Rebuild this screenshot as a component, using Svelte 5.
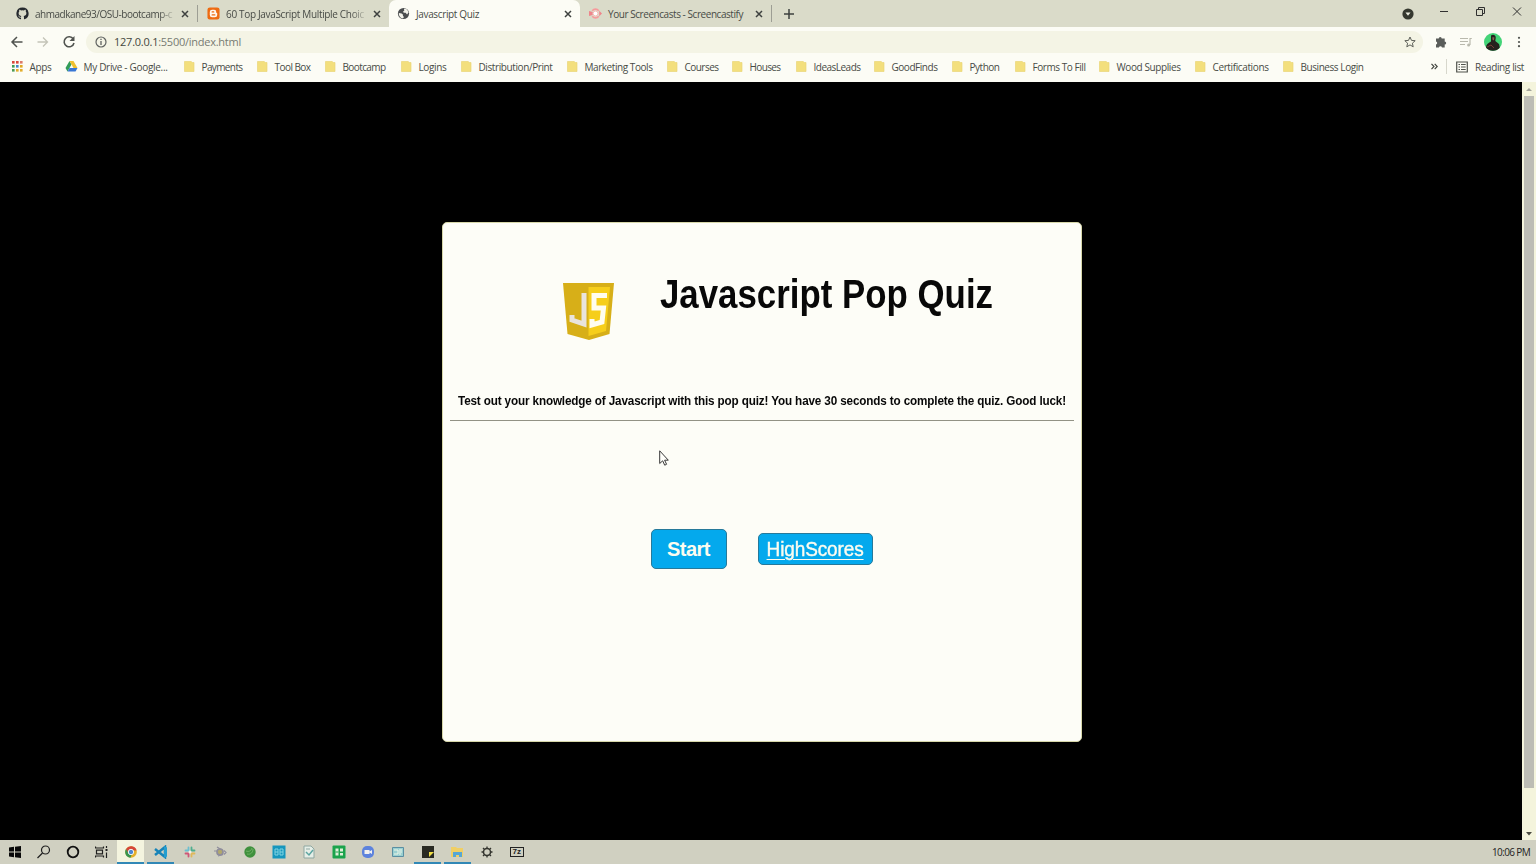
<script>
  const tabs = [
    { icon: 'github', title: 'ahmadkane93/OSU-bootcamp-c', width: 190, text: 137 },
    { icon: 'blogger', title: '60 Top JavaScript Multiple Choic', width: 191, text: 138 },
    { icon: 'globe', title: 'Javascript Quiz', width: 191, text: 63, active: true },
    { icon: 'cast', title: 'Your Screencasts - Screencastify', width: 192, text: 135 }
  ];
  // Slot is the distance to the next bookmark; text is the label's own width.
  const bookmarks = [
    ['Apps', 54, 22], ['My Drive - Google...', 118, 84], ['Payments', 73, 41],
    ['Tool Box', 68, 36], ['Bootcamp', 76, 43], ['Logins', 60, 28],
    ['Distribution/Print', 106, 74], ['Marketing Tools', 100, 68], ['Courses', 65, 34],
    ['Houses', 64, 31], ['IdeasLeads', 78, 47], ['GoodFinds', 78, 46],
    ['Python', 63, 30], ['Forms To Fill', 84, 53], ['Wood Supplies', 96, 64],
    ['Certifications', 88, 56], ['Business Login', 100, 63]
  ];
  const dots = ['#d9483b', '#d9483b', '#dc7a6a', '#3f9c57', '#4285c8', '#e0a825', '#4b9a55', '#e2ad2b', '#e2ad2b'];

  // Spreads a label evenly over a given width.
  function fit(node, width) {
    const apply = () => {
      node.style.letterSpacing = '0px';
      const natural = node.getBoundingClientRect().width;
      const scale = node.offsetWidth ? natural / node.offsetWidth : 1;
      node.style.letterSpacing = (width - natural) / scale / node.textContent.length + 'px';
    };
    apply();
    document.fonts?.ready.then(apply);
  }
</script>

<div class="screen">
  <header>
    <div class="tabs">
      {#each tabs as tab, i}
        <div class="tab" class:active={tab.active} class:ruled={i === 0 || i === 3} style="width:{tab.width}px">
          <svg class="favicon" viewBox="0 0 14 14">
            {#if tab.icon === 'github'}
              <path fill="#25292e" d="M7 .5a6.5 6.5 0 0 0-2 12.7c.3 0 .4-.2.4-.4v-1.400c-1.800.4-2.200-.7-2.200-.7-.3-.8-.8-1-.8-1-.6-.4.1-.4.1-.4.7 0 1 .7 1 .7.6 1 1.500.7 1.900.6 0-.4.2-.7.4-.9-1.500-.2-3-.7-3-3.200 0-.7.3-1.300.7-1.700 0-.2-.3-.9.1-1.800 0 0 .5-.2 1.800.7a6 6 0 0 1 3.200 0c1.300-.9 1.800-.7 1.800-.7.4.9.1 1.600.1 1.800.4.4.7 1 .7 1.700 0 2.500-1.500 3-3 3.200.2.2.4.6.4 1.200v1.900c0 .2.1.4.4.4A6.500 6.500 0 0 0 7 .5Z" />
            {:else if tab.icon === 'blogger'}
              <rect x=".5" y=".5" width="13" height="13" rx="2.500" fill="#ee6b12" />
              <path fill="#fff8ef" d="M5.500 3h2.200A2.300 2.300 0 0 1 10 5.300v.5c0 .5.3.6.6.7.3.1.4.3.4.6v1.400A2.500 2.500 0 0 1 8.500 11h-3A2.500 2.500 0 0 1 3 8.500v-3A2.500 2.500 0 0 1 5.500 3Z" />
              <path d="M5.500 5.300h1.800M5.500 8.500h3" stroke="#ee6b12" stroke-width="1.200" stroke-linecap="round" />
            {:else if tab.icon === 'globe'}
              <circle cx="7" cy="7" r="6" fill="#4b4e50" />
              <path fill="#f3f3eb" d="M2 6.400l3 .5 1.500 1.400-.2 1.200 1.200 1.300-1 1.300C4 12 1.800 10 2 6.400ZM7.500 2l2-.2c1.800.9 2.800 2.400 2.900 4.200l-1.600 2-1.500-1.700-2-.1-1-1.400 1.500-.6Z" />
            {:else}
              <path d="M3.500 4A4.500 4.500 0 0 1 10.500 4M3.500 10A4.500 4.500 0 0 0 10.500 10" fill="none" stroke="#f79a9c" stroke-width="1.800" />
              <path fill="#ef858b" d="M0 4.300 4 5.500v3L0 9.700ZM14 7l-3-3v6Z" />
              <circle cx="7" cy="7" r="2.600" fill="#fff" stroke="#f6b7b3" />
            {/if}
          </svg>
          <span class="title" class:faded={i < 2}><span use:fit={tab.text}>{tab.title}</span></span>
          <svg class="close" viewBox="0 0 8 8"><path d="m1 1 6 6M7 1 1 7" stroke="#3e413f" stroke-width="1.500" /></svg>
        </div>
      {/each}
      <svg class="plus" viewBox="0 0 10 10"><path d="M5 0v10M0 5h10" stroke="#3e413f" stroke-width="1.500" /></svg>
      <div class="window">
        <svg width="12" height="12" viewBox="0 0 12 12"><circle cx="6" cy="6" r="5.600" fill="#35382f" /><path d="M3.500 4.500h5L6 7.800Z" fill="#ecece0" /></svg>
        <svg width="8" height="12" viewBox="0 0 8 12"><path d="M0 5.500h8" stroke="#303030" /></svg>
        <svg width="9" height="12" viewBox="0 0 9 12"><path d="M.5 3.500h6v6h-6ZM2.500 3.500v-2h6v6h-2" fill="none" stroke="#303030" /></svg>
        <svg width="10" height="12" viewBox="0 0 10 12"><path d="m1 1.500 8 8M9 1.500l-8 8" stroke="#303030" /></svg>
      </div>
    </div>

    <div class="toolbar">
      <svg class="nav" viewBox="0 0 14 14"><path d="M12.500 7H2M7 2 2 7l5 5" fill="none" stroke="#50534f" stroke-width="1.500" /></svg>
      <svg class="nav" viewBox="0 0 14 14"><path d="M1.500 7H11M7 2.500 11.500 7 7 11.500" fill="none" stroke="#c4c4b8" stroke-width="1.300" /></svg>
      <svg class="nav" viewBox="0 0 14 14"><path d="M11.300 4A5 5 0 1 0 12 8" fill="none" stroke="#50534f" stroke-width="1.600" /><path d="M12.500 1v5h-5Z" fill="#50534f" /></svg>
      <div class="address">
        <svg width="12" height="12" viewBox="0 0 12 12"><circle cx="6" cy="6" r="5" fill="none" stroke="#5f6260" stroke-width="1.200" /><path d="M6 5v4M6 2.700v1.400" stroke="#5f6260" stroke-width="1.300" /></svg>
        <span class="url" use:fit={127}>127.0.0.1<span class="path">:5500/index.html</span></span>
        <svg class="star" viewBox="0 0 12 12"><path d="m6 1 1.500 3.400 3.700.3-2.800 2.500.8 3.600L6 8.900l-3.200 1.900.8-3.600L.8 4.700l3.700-.3Z" fill="none" stroke="#5c5f58" /></svg>
      </div>
      <div class="extensions">
        <svg width="12" height="12" viewBox="0 0 12 12"><path fill="#5a5d5a" d="M1 2.500h2.700a1.500 1.500 0 0 1 3 0h3v3a1.500 1.500 0 0 1 0 3v3H7a1.600 1.600 0 0 0-3.100 0H1V8.600a1.600 1.600 0 0 0 0-3.100Z" /></svg>
        <svg width="13" height="12" viewBox="0 0 13 12"><path d="M1 2.500h8M1 5.500h8M1 8.500h5M11 9V2.500h1.800" fill="none" stroke="#b9b9ad" stroke-width="1.200" /><circle cx="9.600" cy="9" r="1.500" fill="#b9b9ad" /></svg>
        <svg width="18" height="18" viewBox="0 0 18 18"><circle cx="9" cy="9" r="9" fill="#43d477" /><path fill="#25211e" d="M7 2.500c2-1.500 5-.5 4.700 2.500l-.4 3 3.700 3 .8 3.500A9 9 0 0 1 2 14.500c0-3 2-4.500 5-6Z" /><path d="m8.500 4 2 .5-.6 3-1.500-1Z" fill="#86634e" /><path d="m3 14 4-2 3 3" stroke="#773c35" fill="none" /></svg>
        <svg width="4" height="14" viewBox="0 0 4 14"><g fill="#50534f"><circle cx="2" cy="2.800" r="1.100" /><circle cx="2" cy="7" r="1.100" /><circle cx="2" cy="11.200" r="1.100" /></g></svg>
      </div>
    </div>

    <div class="bookmarks">
      {#each bookmarks as [label, slot, text], i}
        <div class="bookmark" style="width:{slot}px">
          <svg viewBox="0 0 13 13">
            {#if i === 0}
              {#each dots as color, d}
                <rect x={1 + (d % 3) * 4} y={1 + Math.floor(d / 3) * 4} width="2.600" height="2.600" fill={color} />
              {/each}
            {:else if i === 1}
              <path fill="#329c58" d="M4.500 1 .5 8l2 3.500 4-7Z" /><path fill="#efbf2e" d="M4.500 1h4l4 7h-4Z" /><path fill="#3977d5" d="M4.500 8h8l-2 3.500h-8Z" />
            {:else}
              <path d="M1.500 1.500h6.800l1 1h1.700v9H1.500Z" fill="#f3df7d" stroke="#e9d578" stroke-width=".7" />
            {/if}
          </svg>
          <span use:fit={text}>{label}</span>
        </div>
      {/each}
      <div class="reading">
        <svg width="7" height="7" viewBox="0 0 7 7"><path d="m.5.8 2.500 2.700L.5 6.200M3.700.8l2.500 2.700-2.500 2.700" fill="none" stroke="#42453f" stroke-width="1.200" /></svg>
        <i></i>
        <svg width="12" height="12" viewBox="0 0 12 12"><path d="M.7 1h10.600v10H.7ZM2.500 3.500H4M5 3.500h4.700M2.500 6H4M5 6h4.700M2.500 8.500H4M5 8.500h4.700" fill="none" stroke="#50534d" stroke-width="1.200" /></svg>
        <span use:fit={49}>Reading list</span>
      </div>
    </div>
  </header>

  <main>
    <section class="page">
      <div class="card">
        <div class="heading">
          <svg class="logo" viewBox="0 0 52 60">
            <path fill="#d7af18" d="M0 1h51l-4.500 51L26 58 4.500 52Z" />
            <path fill="#f6ce1b" d="M25.500 5H47l-4 44-17.500 5Z" />
            <path fill="none" stroke="#e9e4dc" stroke-width="5" d="M21 11v31L9 38v-5" />
            <path fill="none" stroke="#fffdf0" stroke-width="5" d="M44 13.500H31V26h9.500L39 40l-10 3v-6" />
          </svg>
          <h1><span use:fit={333}>Javascript Pop Quiz</span></h1>
        </div>
        <p><span use:fit={608}>Test out your knowledge of Javascript with this pop quiz! You have 30 seconds to complete the quiz. Good luck!</span></p>
        <hr />
        <div class="actions">
          <button><span use:fit={43}>Start</span></button>
          <a href="#scores"><span use:fit={97}>HighScores</span></a>
        </div>
        <svg class="cursor" viewBox="0 0 10 16"><path d="M.7.8v12.700l3-2.700 2 4.400 1.900-.9-2-4.100h3.700Z" fill="#fffffb" stroke="#383838" /></svg>
      </div>
    </section>
    <aside>
      <svg viewBox="0 0 6 4"><path d="M0 4h6L3 1Z" fill="#a4a49a" /></svg>
      <div class="thumb"></div>
      <svg viewBox="0 0 6 4"><path d="M0 0h6L3 3.500Z" fill="#4a4a40" /></svg>
    </aside>
  </main>

  <footer>
    {#each Array(17) as _, i}
      <div class="task" class:system={i < 4} class:current={i === 4} class:open={[4, 5, 14, 15].includes(i)}>
        <svg viewBox="0 0 14 14">
          {#if i === 0}
            <path fill="#090909" d="m1 2.500 5-.7v4.700H1Zm6-.8L13 1v5.500H7ZM1 7.500h5v4.700l-5-.7Zm6 0h6V13l-6-.8Z" />
          {:else if i === 1}
            <circle cx="8.500" cy="5" r="4" fill="none" stroke="#202020" stroke-width="1.200" /><path d="m5.500 8-5 5" stroke="#202020" stroke-width="1.300" />
          {:else if i === 2}
            <circle cx="7" cy="7" r="5.300" fill="none" stroke="#101010" stroke-width="1.800" />
          {:else if i === 3}
            <path d="M.5 1.500V3h8V1.500M.5 12.500V11h8v1.500M1.500 5.200h6v3.600h-6ZM11.500 1v2m0 4.500V13" fill="none" stroke="#202020" stroke-width="1.200" /><path d="M10.500 4h2v2h-2Z" fill="#202020" />
          {:else if i === 4}
            <circle cx="7" cy="7" r="5.800" fill="#e5af28" /><path fill="#d54639" d="M2 4a5.800 5.800 0 0 1 10.600 1.500H7L4.500 9Z" /><path fill="#399551" d="m2 4 3 5 2.500 1-1 2.800A5.800 5.800 0 0 1 2 4Z" /><circle cx="7" cy="7" r="2.700" fill="#4c86d3" stroke="#f4f4e8" />
          {:else if i === 5}
            <path d="M1 4 11 12V2L1 10" fill="none" stroke="#1683b8" stroke-width="2.500" /><path d="m10 1 3 1.500v9L10 13Z" fill="#239ed0" />
          {:else if i === 6}
            <g stroke-width="1.800" stroke-linecap="round"><path d="M5.500 2.500v3M2.500 5.500h3" stroke="#6cbfd0" /><path d="M8.500 2.500v3h3" stroke="#4eae8e" fill="none" /><path d="M8.500 8.500h3M8.500 8.500v3" stroke="#e0b85a" /><path d="M5.500 8.500v3M2.500 8.500h3" stroke="#cf5678" /></g><circle cx="7" cy="7" r="1.500" fill="#f4efe8" />
          {:else if i === 7}
            <circle cx="7" cy="7" r="3" fill="#b2a86c" stroke="#8f8d9c" stroke-width="1.700" /><path d="M1 6h3m1 5 5-1.500M4 2l4 2.500M11 5.500l2 2-2 2" fill="none" stroke="#8f8d9c" stroke-width="1.200" />
          {:else if i === 8}
            <circle cx="7" cy="7" r="5.700" fill="#3f913d" /><path d="M4 9c4 1 6-2 6-5M3 6c3 1 5 0 6-3" stroke="#71b166" fill="none" />
          {:else if i === 9}
            <rect x=".5" y=".5" width="13" height="13" fill="#1696bd" /><path d="M3 4h3v6H3Zm5 0h3v6H8ZM3 7h3m2 0h3" fill="none" stroke="#80d4e2" />
          {:else if i === 10}
            <path d="M2 1h7l3 3v9H2Z" fill="#e5eee7" stroke="#8fa7a1" /><path d="m4 7 3 3 4-5" fill="none" stroke="#5ba5a1" stroke-width="1.500" /><path d="M4 4h4" stroke="#8fa7a1" />
          {:else if i === 11}
            <rect x=".5" y=".5" width="13" height="13" rx="1" fill="#1aa34c" /><path d="M3.500 3.500h3v7h-3ZM8 3.500h3v3H8ZM8 8h3v2.500H8Z" fill="#ddefd8" /><path d="M3.500 7h3" stroke="#1aa34c" />
          {:else if i === 12}
            <rect x="1" y="1" width="12" height="12" rx="5" fill="#5d83dd" /><path d="M3.500 5h5v4h-5Zm5 1.500L11 5v4L8.500 7.500Z" fill="#f2f1f0" />
          {:else if i === 13}
            <path d="M1.500 2.500h11v9h-11Z" fill="#9ad0d1" stroke="#5a8fa2" /><path d="M3 5h4v4H3m5-4h3M8 7h3M8 9h2" fill="none" stroke="#eef6e7" />
          {:else if i === 14}
            <path fill="#292a22" d="M1 1h12v12H1Z" /><path fill="#f2df46" d="M8 7h5l-5 5Z" />
          {:else if i === 15}
            <path d="M1 2h5l1 1h6v9H1Z" fill="#f0cf65" /><path d="M3 7h9v5H9v-2H6v2H3Z" fill="#56a6d5" />
          {:else}
            <circle cx="7" cy="7" r="3.500" fill="none" stroke="#34352f" stroke-width="1.500" /><path d="M7 1.500v2m0 7v2M1.500 7h2m7 0h2M3 3l1.500 1.500m5 5L11 11m0-8L9.500 4.500m-5 5L3 11" stroke="#34352f" stroke-width="1.300" />
          {/if}
        </svg>
      </div>
    {/each}
    <div class="task"><div class="zip">7z</div></div>
    <time use:fit={38}>10:06 PM</time>
  </footer>
</div>

<style>
  :global(body) { margin: 0; overflow: hidden; }
  * { box-sizing: border-box; }
  svg { display: block; flex: none; }
  .screen { display: flex; flex-direction: column; width: 1536px; height: 864px; background: #000; color: #484b46; font: 10px/14px "Open Sans", sans-serif; }
  header { height: 82px; flex: none; background: #fcfcf5; }
  .tabs { display: flex; height: 27px; padding-left: 8px; background: #dadbc9; align-items: center; }
  .tab { position: relative; display: flex; align-items: center; height: 27px; padding: 0 8px; flex: none; }
  .tab:nth-child(2) { padding-left: 9px; }
  .tab.ruled { border-right: 1px solid #a5a69a; border-image: linear-gradient(transparent 22%, #9d9e94 22% 78%, transparent 78%) 1; }
  .tab.active { background: #fcfcf5; border-radius: 7px 7px 0 0; }
  .tab:nth-child(4) { padding-left: 9px; }
  .favicon { width: 13px; height: 13px; }
  .title { flex: 1; min-width: 0; margin: 0 5px 0 6px; white-space: nowrap; }
  .title span { display: inline-block; }
  .faded { mask-image: linear-gradient(90deg, #000 88%, transparent); }
  .close { width: 8px; height: 8px; }
  .plus { width: 10px; height: 10px; margin-left: 12px; }
  .window { display: flex; align-items: center; margin-left: auto; padding-right: 14px; }
  .window svg:nth-child(2) { margin-left: 26px; }
  .window svg:nth-child(3) { margin-left: 28px; }
  .window svg:nth-child(4) { margin-left: 27px; }
  .window svg:not(:first-child) { margin-bottom: 3px; }
  .toolbar { display: flex; align-items: center; height: 28px; padding: 1px 15px 0 10px; }
  .nav { width: 14px; height: 14px; margin-right: 12px; }
  .nav:nth-child(3) { margin-right: 10px; }
  .address { display: flex; align-items: center; flex: 1; height: 22px; border-radius: 11px; padding: 0 7px 0 9px; background: #f4f4e5; font-size: 11px; }
  .url { margin-left: 7px; color: #444740; white-space: nowrap; }
  .path { color: #777b72; }
  .star { width: 12px; height: 12px; margin-left: auto; }
  .extensions { display: flex; align-items: center; margin-left: 12px; }
  .extensions svg:nth-child(2) { margin-left: 12px; }
  .extensions svg:nth-child(3) { margin-left: 12px; }
  .extensions svg:nth-child(4) { margin-left: 15px; }
  .bookmarks { display: flex; align-items: center; height: 27px; padding: 0 12px 4px 11px; }
  .bookmark { display: flex; align-items: center; flex: none; white-space: nowrap; }
  .bookmark svg { width: 13px; height: 13px; margin-right: 5.5px; }
  .reading { display: flex; align-items: center; margin-left: auto; white-space: nowrap; }
  .reading i { height: 15px; border-left: 1px solid #d7d7cc; margin: 0 9px 0 8px; }
  .reading span { margin-left: 7px; }
  main { display: flex; height: 758px; }
  .page { display: flex; flex: 1; justify-content: center; align-items: flex-start; padding: 140px 0 0 1px; background: #000; }
  .card { position: relative; width: 640px; height: 520px; padding: 0 8px; background: #fdfdf7; border: 1px solid #d7d7a9; border-radius: 5px; color: #080808; font-family: "Liberation Sans", sans-serif; }
  .heading { display: flex; height: 159px; padding: 59px 0 0 112px; align-items: flex-start; }
  .logo { width: 52px; height: 60px; }
  h1 { margin: -12px 0 0 45px; font-size: 40px; line-height: 48px; white-space: nowrap; }
  p { margin: 0; height: 38px; padding: 10px 0 0 7px; font-size: 13px; line-height: 18px; font-weight: bold; white-space: nowrap; }
  h1 span, p span, button span, a span { display: inline-block; white-space: nowrap; }
  h1 span { transform: scaleX(.87); transform-origin: left; }
  p span { transform: scaleX(.9); transform-origin: left; }
  hr { margin: 0 -1px; border: 0; border-top: 1px solid #929285; }
  .actions { display: flex; align-items: center; justify-content: center; gap: 31px; margin-top: 107px; height: 42px; padding-bottom: 1px; }
  button, a { display: flex; align-items: center; justify-content: center; border: 1px solid #26799a; border-radius: 5px; background: #04a9ed; color: #fcfcf0; font: 20px/24px "Liberation Sans", sans-serif; }
  button { width: 76px; height: 40px; padding: 0; font-weight: bold; }
  a { width: 115px; height: 32px; text-decoration: underline; text-underline-offset: 3px; text-decoration-thickness: 1px; -webkit-text-stroke: .4px #fcfcf0; }
  a span { transform: scaleX(.95); }
  .cursor { position: absolute; left: 216px; top: 227px; width: 10px; height: 16px; }
  aside { display: flex; flex-direction: column; align-items: center; width: 14px; padding: 5px 0 4px; background: #f4f4dc; }
  aside svg { width: 6px; height: 4px; }
  .thumb { width: 10px; height: 692px; margin: 5px 0 auto; background: #bdbdb5; }
  footer { display: flex; align-items: center; height: 24px; background: #d0d0c1; }
  .task { display: flex; width: 27px; height: 24px; margin: 0 1.35px; align-items: center; justify-content: center; flex: none; border-bottom: 2px solid transparent; padding-top: 2px; }
  .task.system { width: 29px; margin: 0; }
  .task svg { width: 14px; height: 14px; }
  .task.current { background: #f4f4df; }
  .task.open { border-bottom-color: #3188b6; }
  .zip { width: 14px; height: 10px; border: 1px solid #222; font: bold 8px/8px "Liberation Sans", sans-serif; text-align: center; color: #222; }
  time { margin: 0 6px 0 auto; color: #222; white-space: nowrap; }
</style>
